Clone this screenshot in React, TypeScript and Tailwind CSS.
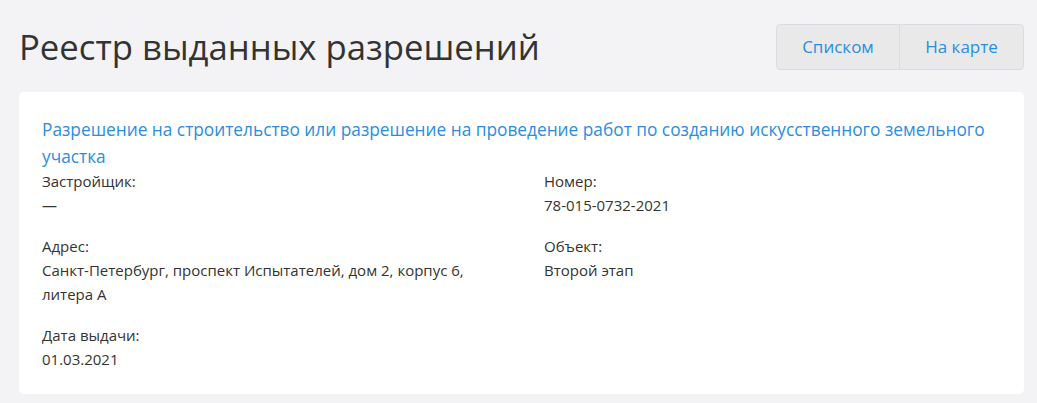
import React from "react";

const Field = ({ label, value }: { label: string; value: React.ReactNode }) => (
  <div>
    <div>{label}</div>
    <div>{value}</div>
  </div>
);

export default function App() {
  return (
    <div
      className="w-[1037px] h-[403px] bg-[#f3f3f5] overflow-hidden text-[#333333]"
      style={{ fontFamily: '"Open Sans", "Noto Sans", sans-serif' }}
    >
      <div className="flex items-start justify-between pl-[19px] pr-[13px] pt-[24px]">
        <h1 className="text-[34.7px] leading-[48px] text-[#333333] mt-[-1px]">Реестр выданных разрешений</h1>
        <div className="flex h-[46px] rounded-[4px] border border-[#dcdcdc] bg-[#e9e9e9] text-[17px] text-[#2a8ddf]">
          <button className="w-[123px] h-full flex items-center justify-center border-r border-[#dcdcdc]">Списком</button>
          <button className="w-[123px] h-full flex items-center justify-center">На карте</button>
        </div>
      </div>
      <div className="mx-[19px] mr-[13px] mt-[21px] bg-white rounded-[5px] pl-[23px] pr-[23px] pt-[24px] pb-[23px] text-[15px] leading-[24px]">
        <a className="block text-[17.3px] leading-[27px] text-[#2a8ddf]">
          Разрешение на строительство или разрешение на проведение работ по созданию искусственного земельного участка
        </a>
        <div className="grid grid-cols-[460px_1fr] gap-x-[42px] gap-y-[17px] mt-[-1px]">
          <Field label="Застройщик:" value="—" />
          <Field label="Номер:" value="78-015-0732-2021" />
          <Field label="Адрес:" value="Санкт-Петербург, проспект Испытателей, дом 2, корпус 6, литера А" />
          <Field label="Объект:" value="Второй этап" />
          <Field label="Дата выдачи:" value="01.03.2021" />
        </div>
      </div>
    </div>
  );
}
